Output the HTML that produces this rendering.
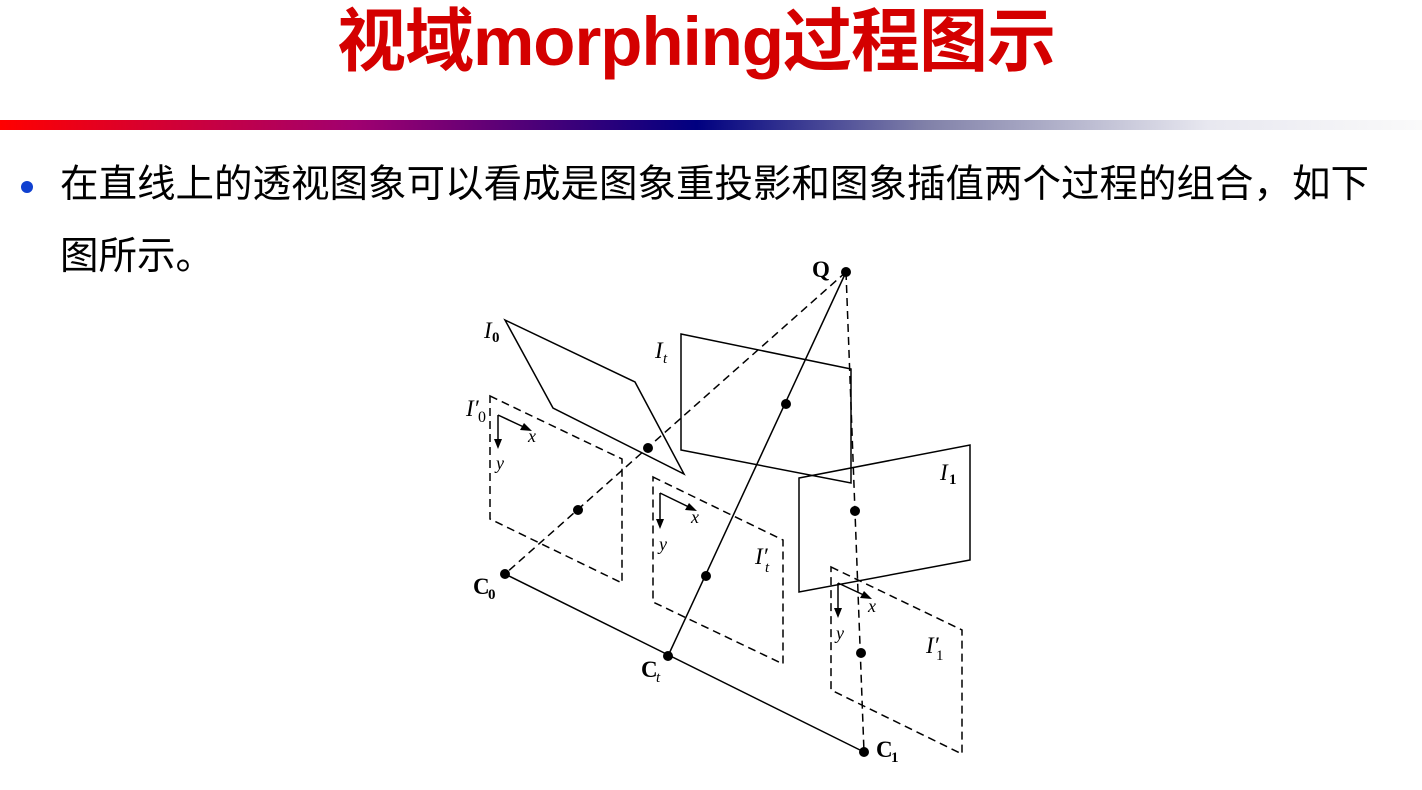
<!DOCTYPE html>
<html><head><meta charset="utf-8"><style>
body{margin:0;width:1422px;height:790px;background:#fff;position:relative;overflow:hidden;font-family:"Liberation Sans","Noto Sans CJK SC",sans-serif}
.t{position:absolute;top:0;left:0;width:1392px;text-align:center;font-size:69px;font-weight:bold;color:#d40000;line-height:84px;letter-spacing:-1px}
.bar{position:absolute;top:120px;left:0;width:1422px;height:10px;background:linear-gradient(90deg,#ff0000 0%,#a00070 25%,#000080 49%,#8080a8 65%,#e8e8f0 85%,#fafafa 100%)}
.b{position:absolute;left:60px;top:149px;font-size:38.5px;line-height:72px;color:#000;width:1340px;white-space:nowrap}
.dot{position:absolute;left:21px;top:181px;width:12px;height:12px;border-radius:50%;background:#1040d0}
svg{position:absolute;left:0;top:0}
</style></head><body>
<div class="t">视域morphing过程图示</div>
<div class="bar"></div>
<div class="dot"></div>
<div class="b">在直线上的透视图象可以看成是图象重投影和图象插值两个过程的组合，如下<br>图所示。</div>
<svg width="1422" height="790" font-family="Liberation Serif,serif">
<g fill="none" stroke="#000" stroke-width="1.5">
<polygon points="505,320 635,382 684,474 553,408"/>
<polygon points="681,334 851,369 851,483 681,450"/>
<polygon points="799,478 970,445 970,560 799,592"/>
<g stroke-dasharray="8,5">
<polygon points="490,396 622,459 622,583 490,519"/>
<polygon points="653,477 783,540 783,664 653,602"/>
<polygon points="831,567 962,630 962,754 831,690"/>
<line x1="846" y1="272" x2="505" y2="574"/>
<line x1="846" y1="272" x2="864" y2="752"/>
</g>
<line x1="846" y1="272" x2="668" y2="656"/>
<line x1="505" y1="574" x2="864" y2="752"/>
<path d="M498,415 L528,429 M498,415 L498,445 M660,493 L693,509 M660,493 L660,525 M838,583 L868,597 M838,583 L838,614"/>
</g>
<g fill="#000">
<path d="M532,431 l-12,-1 l4,-7z M498,449 l-4,-10 h8z M697,511 l-12,-1 l4,-7z M660,529 l-4,-10 h8z M872,599 l-12,-1 l4,-7z M838,618 l-4,-10 h8z"/>
<circle cx="846" cy="272" r="5"/><circle cx="505" cy="574" r="5"/><circle cx="668" cy="656" r="5"/><circle cx="864" cy="752" r="5"/>
<circle cx="648" cy="448" r="5"/><circle cx="578" cy="510" r="5"/><circle cx="786" cy="404" r="5"/><circle cx="706" cy="576" r="5"/><circle cx="855" cy="511" r="5"/><circle cx="861" cy="653" r="5"/>
</g>
<g font-size="23">
<text x="812" y="277" font-weight="bold">Q</text>
<text x="484" y="338" font-style="italic">I</text><text x="492" y="342" font-size="15" font-weight="bold">0</text>
<text x="655" y="358" font-style="italic">I</text><text x="663" y="363" font-size="15" font-style="italic">t</text>
<text x="940" y="480" font-style="italic">I</text><text x="949" y="484" font-size="15" font-weight="bold">1</text>
<text x="466" y="416" font-style="italic">I′</text><text x="478" y="422" font-size="16">0</text>
<text x="755" y="564" font-style="italic">I′</text><text x="765" y="572" font-size="15" font-style="italic">t</text>
<text x="926" y="653" font-style="italic">I′</text><text x="936" y="660" font-size="15">1</text>
<text x="473" y="594" font-weight="bold">C</text><text x="488" y="599" font-size="15" font-weight="bold">0</text>
<text x="641" y="677" font-weight="bold">C</text><text x="656" y="682" font-size="15" font-style="italic">t</text>
<text x="876" y="757" font-weight="bold">C</text><text x="891" y="762" font-size="15" font-weight="bold">1</text>
<g font-size="18" font-style="italic">
<text x="528" y="442">x</text><text x="496" y="469">y</text>
<text x="691" y="523">x</text><text x="659" y="550">y</text>
<text x="868" y="612">x</text><text x="836" y="639">y</text>
</g>
</g>
</svg>
</body></html>
